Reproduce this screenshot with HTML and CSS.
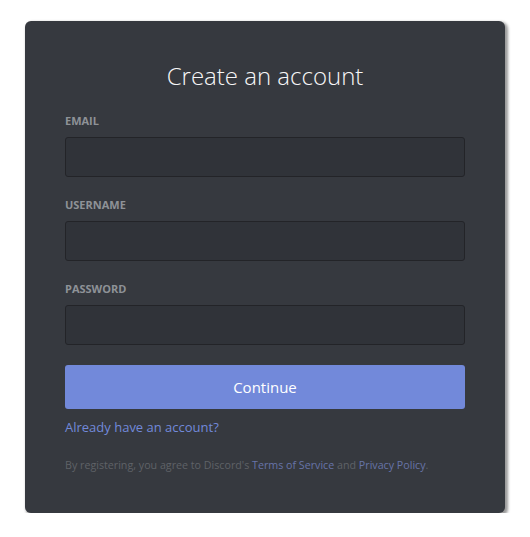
FILE: index.html
```html
<!DOCTYPE HTML>
<html>
<head>
<meta http-equiv="Content-Type" content="text/html; charset=utf-8">
<title>Create an account</title>
<link rel="stylesheet" href="styles.css">
</head>

<body>
<div class="page">
<form class="card" action="javascript:;">
<h3 class="title">Create an account</h3>
<div class="field">
<label class="label" for="email">EMAIL</label>
<input class="input" id="email" type="email">
</div>
<div class="field">
<label class="label" for="username">USERNAME</label>
<input class="input" id="username" type="text">
</div>
<div class="field">
<label class="label" for="password">PASSWORD</label>
<input class="input" id="password" type="password">
</div>
<button class="btn" type="submit">Continue</button>
<p class="login"><a href="javascript:;">Already have an account?</a></p>
<p class="terms">By registering, you agree to Discord's <a href="javascript:;">Terms of Service</a> and <a href="javascript:;">Privacy Policy</a>.</p>
</form>
</div>
</body>
</html>
```

FILE: styles.css
```css
body{margin:0;background:#fff;font-family:"Open Sans","Noto Sans",Arial,sans-serif;}
div, p, form, h3{padding:0;margin:0;}
a{text-decoration:none;}
.page{padding:21px 0 0 25px;}
.card{width:400px;padding:40px 40px 40px;background:#36393f;border-radius:6px;box-shadow:2px 2px 3px 1px rgba(0,0,0,.4);}
.title{font-size:24px;line-height:30px;font-weight:300;color:#f6f6f7;text-align:center;margin-bottom:22px;}
.field{margin-bottom:20px;}
.label{display:block;font-size:11px;line-height:16px;font-weight:700;color:#8e9297;margin-bottom:8px;}
.input{display:block;box-sizing:border-box;width:400px;height:40px;margin:0;background:#303339;border:1px solid #232428;border-radius:3px;outline:none;color:#f6f6f7;}
.btn{display:block;width:400px;height:44px;margin:0;border:0;border-radius:3px;background:#7289da;color:#fff;font-family:inherit;font-size:15px;font-weight:500;}
.login{margin-top:10px;font-size:13px;line-height:16px;}
.login a{color:#7289da;}
.terms{margin-top:22px;font-size:10.7px;line-height:16px;color:#5f6267;}
.terms a{color:#6774a8;}
```
